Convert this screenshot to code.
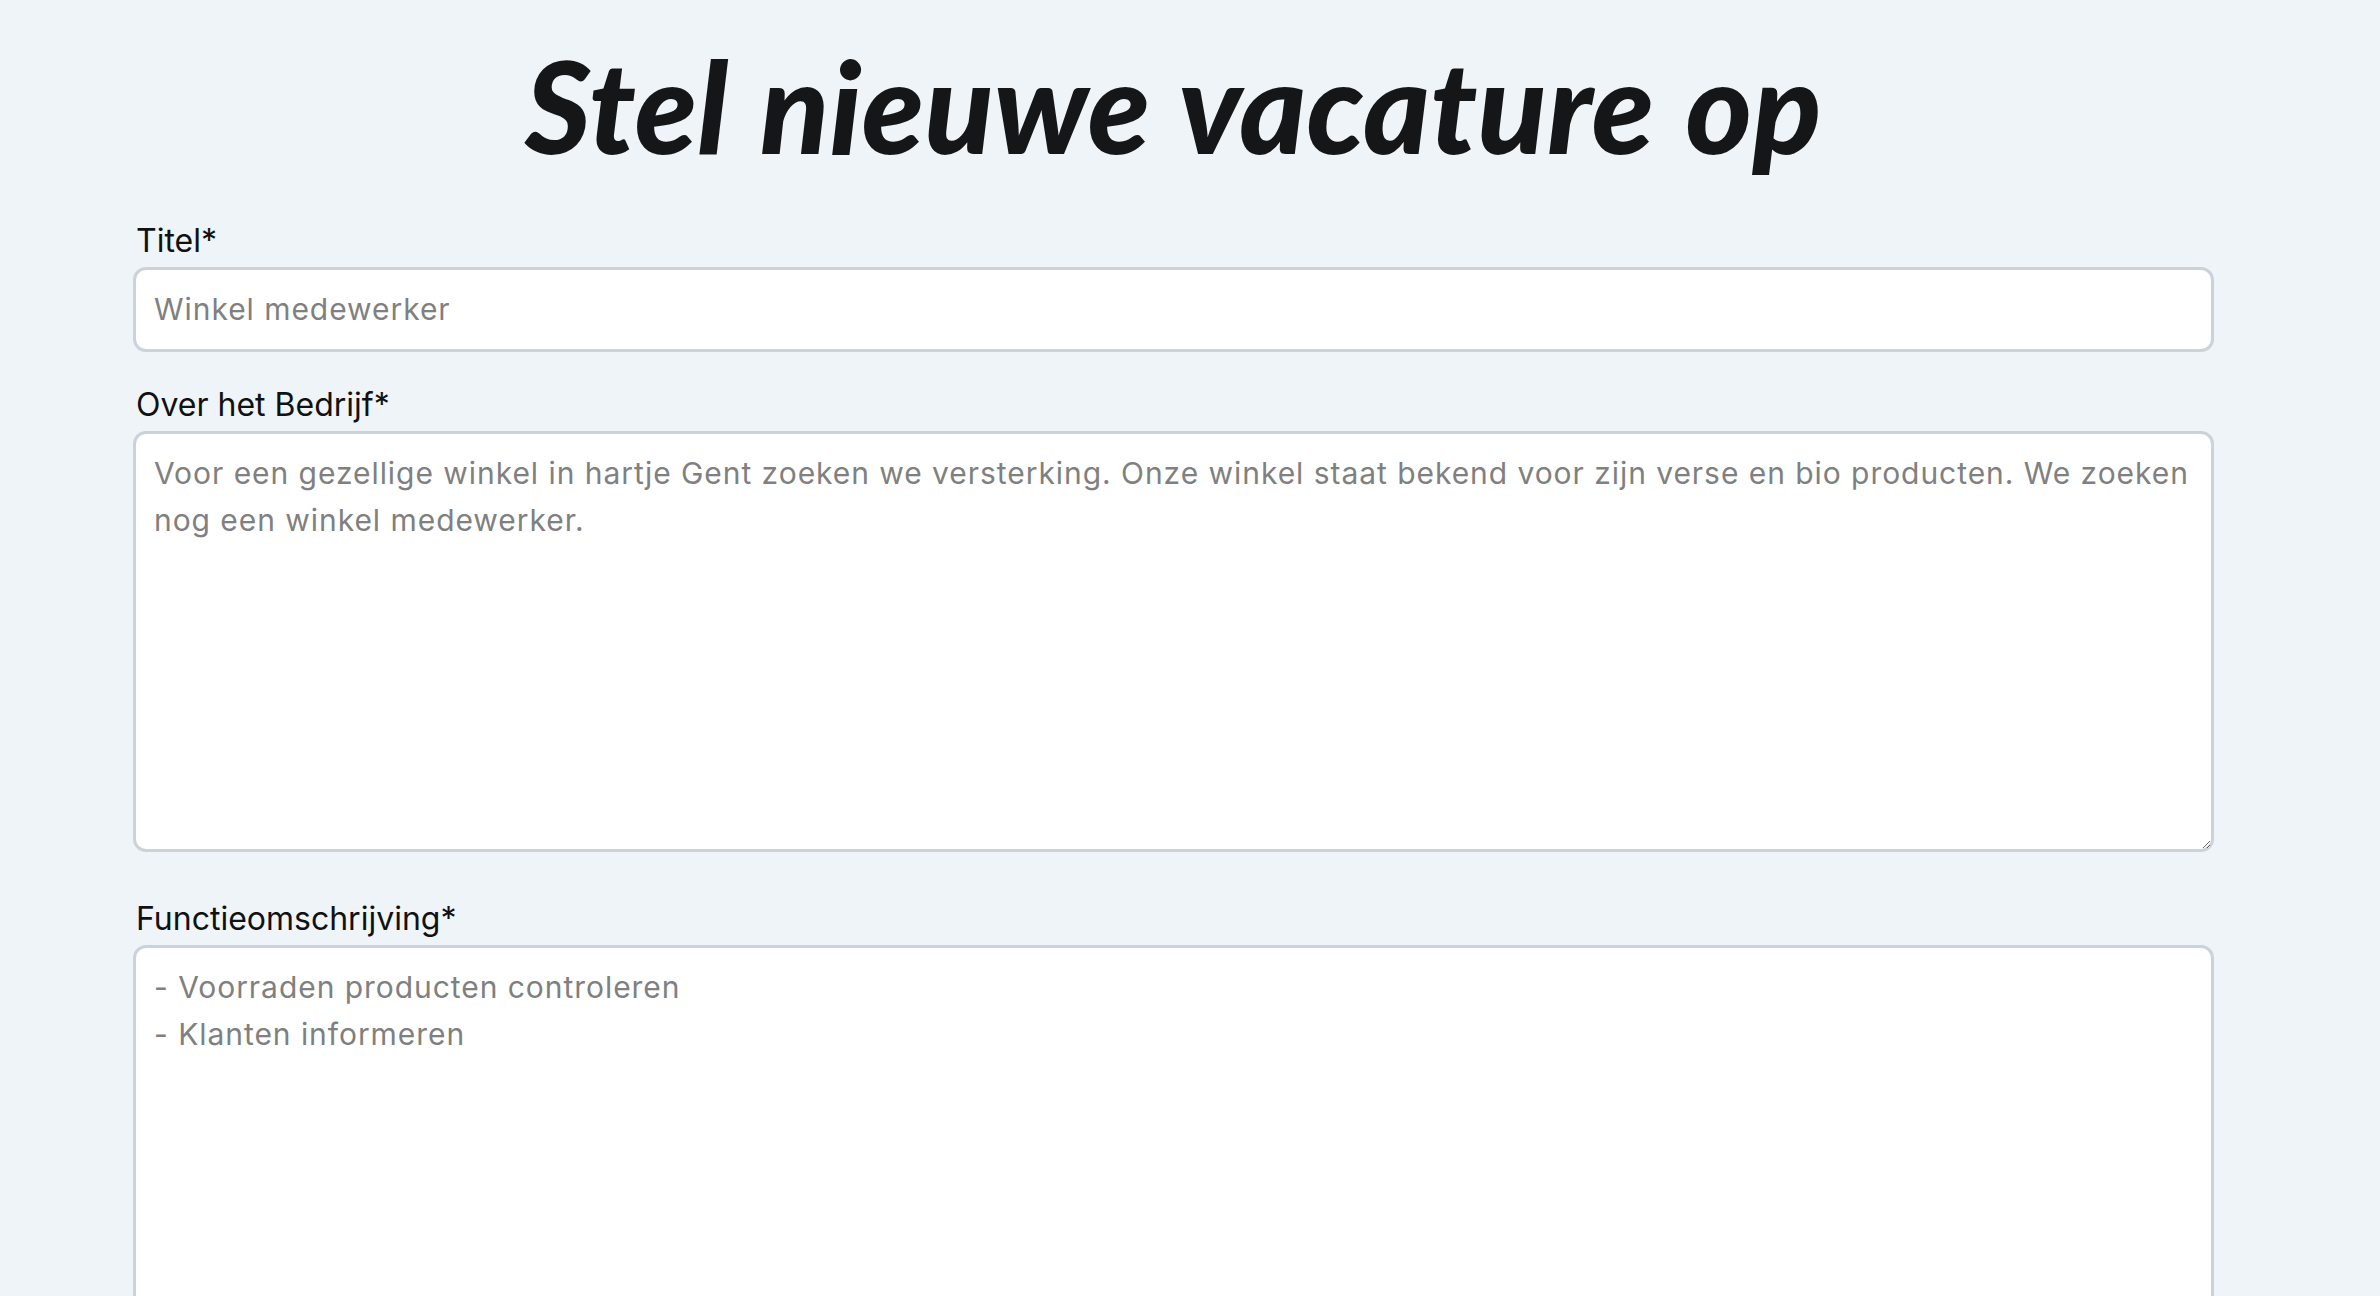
import React from "react";

export default function App() {
  const field =
    "block w-full bg-white border-[3px] border-[#cbd2db] rounded-[13px] pl-[18px] pr-[10px] py-[16px] text-[30px] leading-[47px] tracking-[0.95px] text-[#222] outline-none placeholder:text-[#808080]";
  const label = "block pl-[3px] text-[32px] leading-[40px] mb-[6px] text-[#111]";
  return (
    <div
      className="min-h-screen bg-[#eff4f8] pl-[133px] pr-[166px] pt-[42px] pb-[40px]"
      style={{ fontFamily: "Inter, 'Noto Sans', sans-serif" }}
    >
      <h1
        className="text-center text-[127px] leading-[127px] font-black italic text-[#151617] tracking-[0.3px] [word-spacing:4px] mb-[52px]"
        style={{ fontFamily: "Lato, 'Liberation Sans', sans-serif" }}
      >
        Stel nieuwe vacature op
      </h1>

      <label className={label}>Titel*</label>
      <input className={field} placeholder="Winkel medewerker" />

      <label className={label + " mt-[33px]"}>Over het Bedrijf*</label>
      <textarea
        className={field + " h-[421px] resize-y"}
        placeholder="Voor een gezellige winkel in hartje Gent zoeken we versterking. Onze winkel staat bekend voor zijn verse en bio producten. We zoeken nog een winkel medewerker."
      />

      <label className={label + " mt-[47px]"}>Functieomschrijving*</label>
      <textarea
        className={field + " h-[421px] resize-y"}
        placeholder={"- Voorraden producten controleren\n- Klanten informeren"}
      />
    </div>
  );
}
